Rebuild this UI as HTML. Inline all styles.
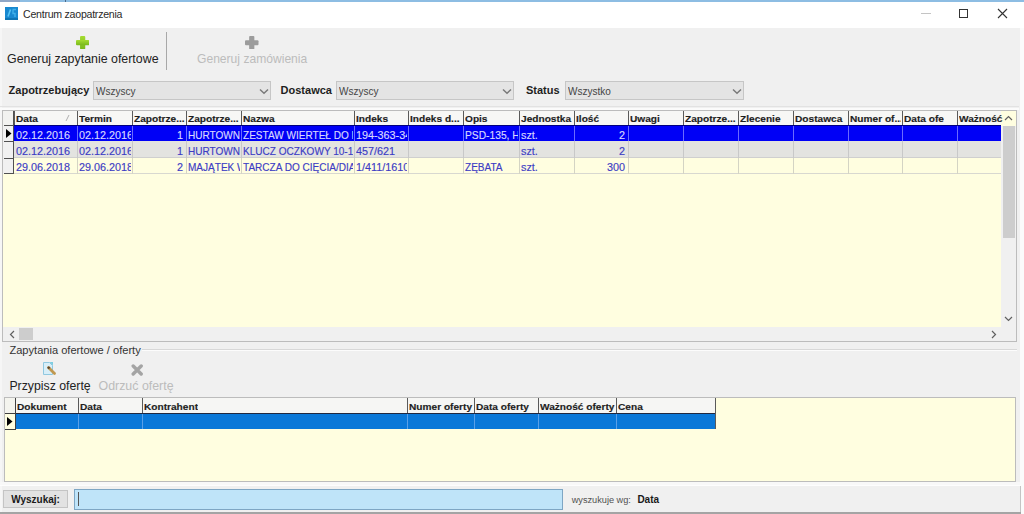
<!DOCTYPE html>
<html><head><meta charset="utf-8"><style>
html,body{margin:0;padding:0;}
body{width:1024px;height:514px;overflow:hidden;position:relative;background:#fafafa;font-family:"Liberation Sans", sans-serif;}
.t{position:absolute;white-space:nowrap;line-height:1;}
.c{position:absolute;white-space:nowrap;overflow:hidden;}
.h{font-weight:bold;font-size:9.4px;color:#1e1e1e;line-height:1;padding-bottom:2px;-webkit-text-stroke:0.15px #1e1e1e;}
.d{font-size:10.8px;line-height:1;padding-bottom:2px;-webkit-text-stroke:0.15px currentColor;}
</style></head><body>
<div style="position:absolute;left:0px;top:0px;width:1024px;height:2px;background:#8dbde3"></div>
<div style="position:absolute;left:0px;top:0px;width:20px;height:2px;background:#8fa6c6"></div>
<div style="position:absolute;left:65px;top:0px;width:1px;height:2px;background:#4a6a8a"></div>
<div style="position:absolute;left:0px;top:2px;width:1024px;height:26px;background:#ffffff"></div>
<svg style="position:absolute;left:5px;top:7px" width="13" height="13"><rect width="13" height="13" fill="#1888d0"/><rect y="11" width="13" height="2" fill="#0e74b4"/><path d="M3 9.5 L5.5 2.5" stroke="#58c4f4" stroke-width="1.6"/><path d="M7.5 2.5 H11 M8 3 V6.5 H10 V10" stroke="#40b0ea" stroke-width="1.4" fill="none"/></svg>
<div class="t" style="left:23px;top:9.03px;font-size:10.6px;color:#2a2a2a;font-weight:normal;letter-spacing:-0.25px">Centrum zaopatrzenia</div>
<div style="position:absolute;left:921px;top:13px;width:10px;height:1px;background:#c4c4c4"></div>
<div style="position:absolute;left:959px;top:9px;width:9px;height:9px;border:1px solid #333;box-sizing:border-box"></div>
<svg style="position:absolute;left:997px;top:8px" width="11" height="11"><path d="M1 1 L10 10 M10 1 L1 10" stroke="#333" stroke-width="1.1"/></svg>
<div style="position:absolute;left:0px;top:28px;width:1020px;height:484px;background:#f0f0f0"></div>
<div style="position:absolute;left:0px;top:28px;width:2px;height:484px;background:#f6f6f6"></div>
<div style="position:absolute;left:1020px;top:28px;width:4px;height:486px;background:#fbfbfb"></div>
<div style="position:absolute;left:1020px;top:486px;width:1px;height:28px;background:#c4c4c4"></div>
<div style="position:absolute;left:0px;top:512px;width:1021px;height:2px;background:#a4a4a4"></div>
<svg style="position:absolute;left:0;top:0" width="0" height="0"><defs><linearGradient id="gg" x1="0" y1="0" x2="0" y2="1"><stop offset="0" stop-color="#a4dc30"/><stop offset="1" stop-color="#78b81c"/></linearGradient></defs></svg>
<svg style="position:absolute;left:75.8px;top:36px" width="13.3" height="13.3"><rect x="4.050000000000001" y="0" width="5.2" height="13.3" rx="1" fill="url(#gg)"/><rect x="0" y="4.050000000000001" width="13.3" height="5.2" rx="1" fill="url(#gg)"/></svg>
<div class="t" style="left:7px;top:52.50px;font-size:12.4px;color:#222;font-weight:normal;">Generuj zapytanie ofertowe</div>
<div style="position:absolute;left:166px;top:32px;width:1px;height:38px;background:#a8a8a8"></div>
<svg style="position:absolute;left:245.3px;top:35.8px" width="13.5" height="13.5"><rect x="4.15" y="0" width="5.2" height="13.5" rx="1" fill="#9c9c9c"/><rect x="0" y="4.15" width="13.5" height="5.2" rx="1" fill="#9c9c9c"/></svg>
<div class="t" style="left:197px;top:52.76px;font-size:12.1px;color:#bcbcbc;font-weight:normal;">Generuj zamówienia</div>
<div class="t" style="left:8.6px;top:84.69px;font-size:11px;color:#1e1e1e;font-weight:bold;">Zapotrzebujący</div>
<div style="position:absolute;left:93px;top:81px;width:178px;height:19px;background:#e4e4e4;border:1px solid #c6c6c6;box-sizing:border-box"></div><div class="t" style="left:96px;top:85.69px;font-size:11px;color:#454545;font-weight:normal;transform:scaleX(0.91);transform-origin:left">Wszyscy</div><svg style="position:absolute;left:258.5px;top:88px" width="10" height="7"><path d="M1 1.5 L5 5.2 L9 1.5" stroke="#7a7a7a" stroke-width="1.5" fill="none"/></svg>
<div class="t" style="left:280.6px;top:84.69px;font-size:11px;color:#1e1e1e;font-weight:bold;">Dostawca</div>
<div style="position:absolute;left:336px;top:81px;width:178px;height:19px;background:#e4e4e4;border:1px solid #c6c6c6;box-sizing:border-box"></div><div class="t" style="left:339px;top:85.69px;font-size:11px;color:#454545;font-weight:normal;transform:scaleX(0.91);transform-origin:left">Wszyscy</div><svg style="position:absolute;left:501.5px;top:88px" width="10" height="7"><path d="M1 1.5 L5 5.2 L9 1.5" stroke="#7a7a7a" stroke-width="1.5" fill="none"/></svg>
<div class="t" style="left:526px;top:84.69px;font-size:11px;color:#1e1e1e;font-weight:bold;">Status</div>
<div style="position:absolute;left:565px;top:81px;width:179px;height:19px;background:#e4e4e4;border:1px solid #c6c6c6;box-sizing:border-box"></div><div class="t" style="left:568px;top:85.69px;font-size:11px;color:#454545;font-weight:normal;transform:scaleX(0.91);transform-origin:left">Wszystko</div><svg style="position:absolute;left:731.5px;top:88px" width="10" height="7"><path d="M1 1.5 L5 5.2 L9 1.5" stroke="#7a7a7a" stroke-width="1.5" fill="none"/></svg>
<div style="position:absolute;left:0px;top:106px;width:1019px;height:1px;background:#e2e2e2"></div>
<div style="position:absolute;left:0px;top:108px;width:1019px;height:2px;background:#fbfbfb"></div>
<div style="position:absolute;left:2px;top:110px;width:1015px;height:232px;background:#fffee0;border:1px solid #bcbcbc;box-sizing:border-box"></div>
<div style="position:absolute;left:3px;top:111px;width:998px;height:15px;background:#f7f7f5"></div>
<div style="position:absolute;left:3px;top:111px;width:11px;height:15px;background:#f2f2f0"></div>
<div style="position:absolute;left:14px;top:111px;width:1px;height:15px;background:#5a5a5a"></div>
<div class="c h" style="left:16px;top:114.04px;width:60px;"><span style="display:inline-block;transform:scaleX(1.08);transform-origin:left">Data</span></div>
<div style="position:absolute;left:77px;top:111px;width:1px;height:15px;background:#5a5a5a"></div>
<div class="c h" style="left:79px;top:114.04px;width:52px;"><span style="display:inline-block;transform:scaleX(1.08);transform-origin:left">Termin</span></div>
<div style="position:absolute;left:132px;top:111px;width:1px;height:15px;background:#5a5a5a"></div>
<div class="c h" style="left:134px;top:114.04px;width:51px;"><span style="display:inline-block;transform:scaleX(1.08);transform-origin:left">Zapotrze...</span></div>
<div style="position:absolute;left:186px;top:111px;width:1px;height:15px;background:#5a5a5a"></div>
<div class="c h" style="left:188px;top:114.04px;width:52px;"><span style="display:inline-block;transform:scaleX(1.08);transform-origin:left">Zapotrze...</span></div>
<div style="position:absolute;left:241px;top:111px;width:1px;height:15px;background:#5a5a5a"></div>
<div class="c h" style="left:243px;top:114.04px;width:110px;"><span style="display:inline-block;transform:scaleX(1.08);transform-origin:left">Nazwa</span></div>
<div style="position:absolute;left:354px;top:111px;width:1px;height:15px;background:#5a5a5a"></div>
<div class="c h" style="left:356px;top:114.04px;width:51px;"><span style="display:inline-block;transform:scaleX(1.08);transform-origin:left">Indeks</span></div>
<div style="position:absolute;left:408px;top:111px;width:1px;height:15px;background:#5a5a5a"></div>
<div class="c h" style="left:410px;top:114.04px;width:52px;"><span style="display:inline-block;transform:scaleX(1.08);transform-origin:left">Indeks d...</span></div>
<div style="position:absolute;left:463px;top:111px;width:1px;height:15px;background:#5a5a5a"></div>
<div class="c h" style="left:465px;top:114.04px;width:53px;"><span style="display:inline-block;transform:scaleX(1.08);transform-origin:left">Opis</span></div>
<div style="position:absolute;left:519px;top:111px;width:1px;height:15px;background:#5a5a5a"></div>
<div class="c h" style="left:521px;top:114.04px;width:52px;"><span style="display:inline-block;transform:scaleX(1.08);transform-origin:left">Jednostka</span></div>
<div style="position:absolute;left:574px;top:111px;width:1px;height:15px;background:#5a5a5a"></div>
<div class="c h" style="left:576px;top:114.04px;width:51px;"><span style="display:inline-block;transform:scaleX(1.08);transform-origin:left">Ilość</span></div>
<div style="position:absolute;left:628px;top:111px;width:1px;height:15px;background:#5a5a5a"></div>
<div class="c h" style="left:630px;top:114.04px;width:52px;"><span style="display:inline-block;transform:scaleX(1.08);transform-origin:left">Uwagi</span></div>
<div style="position:absolute;left:683px;top:111px;width:1px;height:15px;background:#5a5a5a"></div>
<div class="c h" style="left:685px;top:114.04px;width:52px;"><span style="display:inline-block;transform:scaleX(1.08);transform-origin:left">Zapotrze...</span></div>
<div style="position:absolute;left:738px;top:111px;width:1px;height:15px;background:#5a5a5a"></div>
<div class="c h" style="left:740px;top:114.04px;width:52px;"><span style="display:inline-block;transform:scaleX(1.08);transform-origin:left">Zlecenie</span></div>
<div style="position:absolute;left:793px;top:111px;width:1px;height:15px;background:#5a5a5a"></div>
<div class="c h" style="left:795px;top:114.04px;width:52px;"><span style="display:inline-block;transform:scaleX(1.08);transform-origin:left">Dostawca</span></div>
<div style="position:absolute;left:848px;top:111px;width:1px;height:15px;background:#5a5a5a"></div>
<div class="c h" style="left:850px;top:114.04px;width:51px;"><span style="display:inline-block;transform:scaleX(1.08);transform-origin:left">Numer of...</span></div>
<div style="position:absolute;left:902px;top:111px;width:1px;height:15px;background:#5a5a5a"></div>
<div class="c h" style="left:904px;top:114.04px;width:52px;"><span style="display:inline-block;transform:scaleX(1.08);transform-origin:left">Data ofe</span></div>
<div style="position:absolute;left:957px;top:111px;width:1px;height:15px;background:#5a5a5a"></div>
<div class="c h" style="left:959px;top:114.04px;width:50px;"><span style="display:inline-block;transform:scaleX(1.08);transform-origin:left">Ważność</span></div>
<svg style="position:absolute;left:65px;top:114px" width="5" height="8"><path d="M1 7 L4 1" stroke="#b0b0b0" stroke-width="1"/></svg>
<div style="position:absolute;left:14px;top:126px;width:987px;height:15px;background:#0000f6"></div>
<div style="position:absolute;left:14px;top:141px;width:987px;height:17px;background:#e3e3e0"></div>
<div style="position:absolute;left:14px;top:158px;width:987px;height:16px;background:#fffee0"></div>
<div style="position:absolute;left:14px;top:157px;width:987px;height:1px;background:#cfcfcf"></div>
<div style="position:absolute;left:14px;top:173px;width:987px;height:1px;background:#d8d8d0"></div>
<div style="position:absolute;left:77px;top:126px;width:1px;height:15px;background:#6a6aff"></div>
<div class="c d" style="left:16px;top:129.86px;width:60px;font-size:10.8px;color:#d8d8ff;text-align:left;box-sizing:border-box"><span style="display:inline-block;transform:scaleX(1.0);transform-origin:left">02.12.2016</span></div>
<div style="position:absolute;left:132px;top:126px;width:1px;height:15px;background:#6a6aff"></div>
<div class="c d" style="left:79px;top:129.86px;width:52px;font-size:10.8px;color:#d8d8ff;text-align:left;box-sizing:border-box"><span style="display:inline-block;transform:scaleX(1.0);transform-origin:left">02.12.2016</span></div>
<div style="position:absolute;left:186px;top:126px;width:1px;height:15px;background:#6a6aff"></div>
<div class="c d" style="left:134px;top:129.86px;width:51px;font-size:10.8px;color:#d8d8ff;text-align:right;padding-right:2px;box-sizing:border-box"><span style="display:inline-block;transform:scaleX(1.0);transform-origin:right">1</span></div>
<div style="position:absolute;left:241px;top:126px;width:1px;height:15px;background:#6a6aff"></div>
<div class="c d" style="left:188px;top:129.86px;width:52px;font-size:10.8px;color:#d8d8ff;text-align:left;box-sizing:border-box"><span style="display:inline-block;transform:scaleX(0.93);transform-origin:left">HURTOWNIA</span></div>
<div style="position:absolute;left:354px;top:126px;width:1px;height:15px;background:#6a6aff"></div>
<div class="c d" style="left:243px;top:129.86px;width:110px;font-size:10.8px;color:#d8d8ff;text-align:left;box-sizing:border-box"><span style="display:inline-block;transform:scaleX(0.93);transform-origin:left">ZESTAW WIERTEŁ DO METALU</span></div>
<div style="position:absolute;left:408px;top:126px;width:1px;height:15px;background:#6a6aff"></div>
<div class="c d" style="left:356px;top:129.86px;width:51px;font-size:10.8px;color:#d8d8ff;text-align:left;box-sizing:border-box"><span style="display:inline-block;transform:scaleX(1.0);transform-origin:left">194-363-341</span></div>
<div style="position:absolute;left:463px;top:126px;width:1px;height:15px;background:#6a6aff"></div>
<div style="position:absolute;left:519px;top:126px;width:1px;height:15px;background:#6a6aff"></div>
<div class="c d" style="left:465px;top:129.86px;width:53px;font-size:10.8px;color:#d8d8ff;text-align:left;box-sizing:border-box"><span style="display:inline-block;transform:scaleX(0.95);transform-origin:left">PSD-135, HSS</span></div>
<div style="position:absolute;left:574px;top:126px;width:1px;height:15px;background:#6a6aff"></div>
<div class="c d" style="left:521px;top:129.86px;width:52px;font-size:10.8px;color:#d8d8ff;text-align:left;box-sizing:border-box"><span style="display:inline-block;transform:scaleX(1.0);transform-origin:left">szt.</span></div>
<div style="position:absolute;left:628px;top:126px;width:1px;height:15px;background:#6a6aff"></div>
<div class="c d" style="left:576px;top:129.86px;width:51px;font-size:10.8px;color:#d8d8ff;text-align:right;padding-right:2px;box-sizing:border-box"><span style="display:inline-block;transform:scaleX(1.0);transform-origin:right">2</span></div>
<div style="position:absolute;left:683px;top:126px;width:1px;height:15px;background:#6a6aff"></div>
<div style="position:absolute;left:738px;top:126px;width:1px;height:15px;background:#6a6aff"></div>
<div style="position:absolute;left:793px;top:126px;width:1px;height:15px;background:#6a6aff"></div>
<div style="position:absolute;left:848px;top:126px;width:1px;height:15px;background:#6a6aff"></div>
<div style="position:absolute;left:902px;top:126px;width:1px;height:15px;background:#6a6aff"></div>
<div style="position:absolute;left:957px;top:126px;width:1px;height:15px;background:#6a6aff"></div>
<div style="position:absolute;left:1001px;top:126px;width:1px;height:15px;background:#6a6aff"></div>
<div style="position:absolute;left:77px;top:141px;width:1px;height:17px;background:#c8c8c8"></div>
<div class="c d" style="left:16px;top:145.86px;width:60px;font-size:10.8px;color:#3c3cc4;text-align:left;box-sizing:border-box"><span style="display:inline-block;transform:scaleX(1.0);transform-origin:left">02.12.2016</span></div>
<div style="position:absolute;left:132px;top:141px;width:1px;height:17px;background:#c8c8c8"></div>
<div class="c d" style="left:79px;top:145.86px;width:52px;font-size:10.8px;color:#3c3cc4;text-align:left;box-sizing:border-box"><span style="display:inline-block;transform:scaleX(1.0);transform-origin:left">02.12.2016</span></div>
<div style="position:absolute;left:186px;top:141px;width:1px;height:17px;background:#c8c8c8"></div>
<div class="c d" style="left:134px;top:145.86px;width:51px;font-size:10.8px;color:#3c3cc4;text-align:right;padding-right:2px;box-sizing:border-box"><span style="display:inline-block;transform:scaleX(1.0);transform-origin:right">1</span></div>
<div style="position:absolute;left:241px;top:141px;width:1px;height:17px;background:#c8c8c8"></div>
<div class="c d" style="left:188px;top:145.86px;width:52px;font-size:10.8px;color:#3c3cc4;text-align:left;box-sizing:border-box"><span style="display:inline-block;transform:scaleX(0.93);transform-origin:left">HURTOWNIA</span></div>
<div style="position:absolute;left:354px;top:141px;width:1px;height:17px;background:#c8c8c8"></div>
<div class="c d" style="left:243px;top:145.86px;width:110px;font-size:10.8px;color:#3c3cc4;text-align:left;box-sizing:border-box"><span style="display:inline-block;transform:scaleX(0.93);transform-origin:left">KLUCZ OCZKOWY 10-13</span></div>
<div style="position:absolute;left:408px;top:141px;width:1px;height:17px;background:#c8c8c8"></div>
<div class="c d" style="left:356px;top:145.86px;width:51px;font-size:10.8px;color:#3c3cc4;text-align:left;box-sizing:border-box"><span style="display:inline-block;transform:scaleX(1.0);transform-origin:left">457/621</span></div>
<div style="position:absolute;left:463px;top:141px;width:1px;height:17px;background:#c8c8c8"></div>
<div style="position:absolute;left:519px;top:141px;width:1px;height:17px;background:#c8c8c8"></div>
<div style="position:absolute;left:574px;top:141px;width:1px;height:17px;background:#c8c8c8"></div>
<div class="c d" style="left:521px;top:145.86px;width:52px;font-size:10.8px;color:#3c3cc4;text-align:left;box-sizing:border-box"><span style="display:inline-block;transform:scaleX(1.0);transform-origin:left">szt.</span></div>
<div style="position:absolute;left:628px;top:141px;width:1px;height:17px;background:#c8c8c8"></div>
<div class="c d" style="left:576px;top:145.86px;width:51px;font-size:10.8px;color:#3c3cc4;text-align:right;padding-right:2px;box-sizing:border-box"><span style="display:inline-block;transform:scaleX(1.0);transform-origin:right">2</span></div>
<div style="position:absolute;left:683px;top:141px;width:1px;height:17px;background:#c8c8c8"></div>
<div style="position:absolute;left:738px;top:141px;width:1px;height:17px;background:#c8c8c8"></div>
<div style="position:absolute;left:793px;top:141px;width:1px;height:17px;background:#c8c8c8"></div>
<div style="position:absolute;left:848px;top:141px;width:1px;height:17px;background:#c8c8c8"></div>
<div style="position:absolute;left:902px;top:141px;width:1px;height:17px;background:#c8c8c8"></div>
<div style="position:absolute;left:957px;top:141px;width:1px;height:17px;background:#c8c8c8"></div>
<div style="position:absolute;left:1001px;top:141px;width:1px;height:17px;background:#c8c8c8"></div>
<div style="position:absolute;left:77px;top:158px;width:1px;height:16px;background:#d4d4c4"></div>
<div class="c d" style="left:16px;top:161.86px;width:60px;font-size:10.8px;color:#3c3cc4;text-align:left;box-sizing:border-box"><span style="display:inline-block;transform:scaleX(1.0);transform-origin:left">29.06.2018</span></div>
<div style="position:absolute;left:132px;top:158px;width:1px;height:16px;background:#d4d4c4"></div>
<div class="c d" style="left:79px;top:161.86px;width:52px;font-size:10.8px;color:#3c3cc4;text-align:left;box-sizing:border-box"><span style="display:inline-block;transform:scaleX(1.0);transform-origin:left">29.06.2018</span></div>
<div style="position:absolute;left:186px;top:158px;width:1px;height:16px;background:#d4d4c4"></div>
<div class="c d" style="left:134px;top:161.86px;width:51px;font-size:10.8px;color:#3c3cc4;text-align:right;padding-right:2px;box-sizing:border-box"><span style="display:inline-block;transform:scaleX(1.0);transform-origin:right">2</span></div>
<div style="position:absolute;left:241px;top:158px;width:1px;height:16px;background:#d4d4c4"></div>
<div class="c d" style="left:188px;top:161.86px;width:52px;font-size:10.8px;color:#3c3cc4;text-align:left;box-sizing:border-box"><span style="display:inline-block;transform:scaleX(0.93);transform-origin:left">MAJĄTEK W</span></div>
<div style="position:absolute;left:354px;top:158px;width:1px;height:16px;background:#d4d4c4"></div>
<div class="c d" style="left:243px;top:161.86px;width:110px;font-size:10.8px;color:#3c3cc4;text-align:left;box-sizing:border-box"><span style="display:inline-block;transform:scaleX(0.93);transform-origin:left">TARCZA DO CIĘCIA/DIAMENT</span></div>
<div style="position:absolute;left:408px;top:158px;width:1px;height:16px;background:#d4d4c4"></div>
<div class="c d" style="left:356px;top:161.86px;width:51px;font-size:10.8px;color:#3c3cc4;text-align:left;box-sizing:border-box"><span style="display:inline-block;transform:scaleX(1.0);transform-origin:left">1/411/1610</span></div>
<div style="position:absolute;left:463px;top:158px;width:1px;height:16px;background:#d4d4c4"></div>
<div style="position:absolute;left:519px;top:158px;width:1px;height:16px;background:#d4d4c4"></div>
<div class="c d" style="left:465px;top:161.86px;width:53px;font-size:10.8px;color:#3c3cc4;text-align:left;box-sizing:border-box"><span style="display:inline-block;transform:scaleX(0.93);transform-origin:left">ZĘBATA</span></div>
<div style="position:absolute;left:574px;top:158px;width:1px;height:16px;background:#d4d4c4"></div>
<div class="c d" style="left:521px;top:161.86px;width:52px;font-size:10.8px;color:#3c3cc4;text-align:left;box-sizing:border-box"><span style="display:inline-block;transform:scaleX(1.0);transform-origin:left">szt.</span></div>
<div style="position:absolute;left:628px;top:158px;width:1px;height:16px;background:#d4d4c4"></div>
<div class="c d" style="left:576px;top:161.86px;width:51px;font-size:10.8px;color:#3c3cc4;text-align:right;padding-right:2px;box-sizing:border-box"><span style="display:inline-block;transform:scaleX(1.0);transform-origin:right">300</span></div>
<div style="position:absolute;left:683px;top:158px;width:1px;height:16px;background:#d4d4c4"></div>
<div style="position:absolute;left:738px;top:158px;width:1px;height:16px;background:#d4d4c4"></div>
<div style="position:absolute;left:793px;top:158px;width:1px;height:16px;background:#d4d4c4"></div>
<div style="position:absolute;left:848px;top:158px;width:1px;height:16px;background:#d4d4c4"></div>
<div style="position:absolute;left:902px;top:158px;width:1px;height:16px;background:#d4d4c4"></div>
<div style="position:absolute;left:957px;top:158px;width:1px;height:16px;background:#d4d4c4"></div>
<div style="position:absolute;left:1001px;top:158px;width:1px;height:16px;background:#d4d4c4"></div>
<div style="position:absolute;left:14px;top:125px;width:987px;height:1px;background:#000080"></div>
<div style="position:absolute;left:3px;top:126px;width:10px;height:48px;background:#f1f1f1"></div>
<div style="position:absolute;left:4px;top:125px;width:10px;height:1px;background:#505050"></div>
<div style="position:absolute;left:4px;top:141px;width:10px;height:1px;background:#505050"></div>
<div style="position:absolute;left:4px;top:158px;width:10px;height:1px;background:#505050"></div>
<div style="position:absolute;left:4px;top:173px;width:10px;height:1px;background:#505050"></div>
<div style="position:absolute;left:13px;top:111px;width:1px;height:63px;background:#505050"></div>
<svg style="position:absolute;left:6px;top:129px" width="6" height="9"><path d="M0 0 L5.5 4.5 L0 9 Z" fill="#000"/></svg>
<div style="position:absolute;left:1001px;top:126px;width:15px;height:201px;background:#f0f0f0"></div>
<svg style="position:absolute;left:1004px;top:115px" width="9" height="6"><path d="M1 5 L4.5 1.5 L8 5" stroke="#606060" stroke-width="1.2" fill="none"/></svg>
<div style="position:absolute;left:1003px;top:126px;width:12px;height:112px;background:#cdcdcd"></div>
<svg style="position:absolute;left:1004px;top:316px" width="9" height="6"><path d="M1 1 L4.5 4.5 L8 1" stroke="#606060" stroke-width="1.2" fill="none"/></svg>
<div style="position:absolute;left:3px;top:327px;width:1013px;height:14px;background:#f0f0f0"></div>
<svg style="position:absolute;left:9px;top:330px" width="6" height="9"><path d="M5 1 L1.5 4.5 L5 8" stroke="#606060" stroke-width="1.2" fill="none"/></svg>
<div style="position:absolute;left:19px;top:328px;width:14px;height:12px;background:#cdcdcd"></div>
<svg style="position:absolute;left:991px;top:330px" width="6" height="9"><path d="M1 1 L4.5 4.5 L1 8" stroke="#606060" stroke-width="1.2" fill="none"/></svg>
<div class="t" style="left:9.4px;top:344.60px;font-size:11.1px;color:#333;font-weight:normal;">Zapytania ofertowe / oferty</div>
<div style="position:absolute;left:142px;top:349px;width:875px;height:1px;background:#d8d8d8"></div>
<div style="position:absolute;left:142px;top:350px;width:875px;height:1px;background:#fcfcfc"></div>
<svg style="position:absolute;left:42px;top:361px" width="16" height="16"><path d="M1.5 1.5 H7.5 L10.5 4.5 V13.5 H1.5 Z" fill="#d8eef8" stroke="#90c8e0" stroke-width="1"/><path d="M7.5 1 L11 4.5 L11 1 Z" fill="#7ccce0"/><path d="M6.5 6.5 L12.5 12.5" stroke="#c09850" stroke-width="2.8" stroke-linecap="round"/><path d="M6 6 L7.5 7.5" stroke="#5a4630" stroke-width="2.4"/></svg>
<div class="t" style="left:9.4px;top:379.59px;font-size:12.3px;color:#222;font-weight:normal;">Przypisz ofertę</div>
<svg style="position:absolute;left:130.5px;top:363.5px" width="13" height="12"><path d="M2.2 2 L10.2 10 M10.2 2 L2.2 10" stroke="#a4a4a4" stroke-width="3.4" stroke-linecap="round"/></svg>
<div class="t" style="left:98.5px;top:379.50px;font-size:12.4px;color:#bcbcbc;font-weight:normal;">Odrzuć ofertę</div>
<div style="position:absolute;left:4px;top:397px;width:1012px;height:85px;background:#fffee0;border:1px solid #bcbcbc;box-sizing:border-box"></div>
<div style="position:absolute;left:5px;top:398px;width:710px;height:15px;background:#f6f6f4"></div>
<div style="position:absolute;left:5px;top:398px;width:10px;height:15px;background:#f4f4ee"></div>
<div style="position:absolute;left:15px;top:398px;width:1px;height:16px;background:#5a5a5a"></div>
<div class="c h" style="left:17px;top:402.04px;width:60px;"><span style="display:inline-block;transform:scaleX(1.08);transform-origin:left">Dokument</span></div>
<div style="position:absolute;left:78px;top:398px;width:1px;height:16px;background:#5a5a5a"></div>
<div class="c h" style="left:80px;top:402.04px;width:61px;"><span style="display:inline-block;transform:scaleX(1.08);transform-origin:left">Data</span></div>
<div style="position:absolute;left:142px;top:398px;width:1px;height:16px;background:#5a5a5a"></div>
<div class="c h" style="left:144px;top:402.04px;width:262px;"><span style="display:inline-block;transform:scaleX(1.08);transform-origin:left">Kontrahent</span></div>
<div style="position:absolute;left:407px;top:398px;width:1px;height:16px;background:#5a5a5a"></div>
<div class="c h" style="left:409px;top:402.04px;width:64px;"><span style="display:inline-block;transform:scaleX(1.08);transform-origin:left">Numer oferty</span></div>
<div style="position:absolute;left:474px;top:398px;width:1px;height:16px;background:#5a5a5a"></div>
<div class="c h" style="left:476px;top:402.04px;width:61px;"><span style="display:inline-block;transform:scaleX(1.08);transform-origin:left">Data oferty</span></div>
<div style="position:absolute;left:538px;top:398px;width:1px;height:16px;background:#5a5a5a"></div>
<div class="c h" style="left:540px;top:402.04px;width:75px;"><span style="display:inline-block;transform:scaleX(1.08);transform-origin:left">Ważność oferty</span></div>
<div style="position:absolute;left:616px;top:398px;width:1px;height:16px;background:#5a5a5a"></div>
<div class="c h" style="left:618px;top:402.04px;width:96px;"><span style="display:inline-block;transform:scaleX(1.08);transform-origin:left">Cena</span></div>
<div style="position:absolute;left:715px;top:398px;width:1px;height:31px;background:#5a5a5a"></div>
<div style="position:absolute;left:15px;top:413px;width:700px;height:16px;background:#0a78d8"></div>
<div style="position:absolute;left:15px;top:413px;width:700px;height:1px;background:#202840"></div>
<div style="position:absolute;left:78px;top:414px;width:1px;height:15px;background:#5aa0e8"></div>
<div style="position:absolute;left:142px;top:414px;width:1px;height:15px;background:#5aa0e8"></div>
<div style="position:absolute;left:407px;top:414px;width:1px;height:15px;background:#5aa0e8"></div>
<div style="position:absolute;left:474px;top:414px;width:1px;height:15px;background:#5aa0e8"></div>
<div style="position:absolute;left:538px;top:414px;width:1px;height:15px;background:#5aa0e8"></div>
<div style="position:absolute;left:616px;top:414px;width:1px;height:15px;background:#5aa0e8"></div>
<div style="position:absolute;left:5px;top:413px;width:10px;height:1px;background:#404040"></div>
<div style="position:absolute;left:5px;top:429px;width:10px;height:1px;background:#404040"></div>
<div style="position:absolute;left:15px;top:398px;width:1px;height:32px;background:#404040"></div>
<svg style="position:absolute;left:7px;top:417px" width="6" height="9"><path d="M0 0 L5.5 4.5 L0 9 Z" fill="#000"/></svg>
<div style="position:absolute;left:0px;top:482px;width:1020px;height:4px;background:#f8f8f8"></div>
<div style="position:absolute;left:0px;top:485px;width:1020px;height:1px;background:#fdfdfd"></div>
<div style="position:absolute;left:3px;top:490px;width:65px;height:18px;background:#e2e2e2;border:1px solid #c4c4c4;box-sizing:border-box"></div>
<div class="t" style="left:11.2px;top:494.54px;font-size:10px;color:#1a1a1a;font-weight:bold;">Wyszukaj:</div>
<div style="position:absolute;left:74px;top:489px;width:489px;height:21px;background:#bfe4f9;border:1px solid #7ea6c4;box-sizing:border-box"></div>
<div style="position:absolute;left:78px;top:492px;width:1px;height:14px;background:#555"></div>
<div class="t" style="left:571.7px;top:495.71px;font-size:9.2px;color:#505050;font-weight:normal;">wyszukuje wg:</div>
<div class="t" style="left:637.4px;top:494.84px;font-size:10px;color:#1a1a1a;font-weight:bold;">Data</div>
</body></html>
